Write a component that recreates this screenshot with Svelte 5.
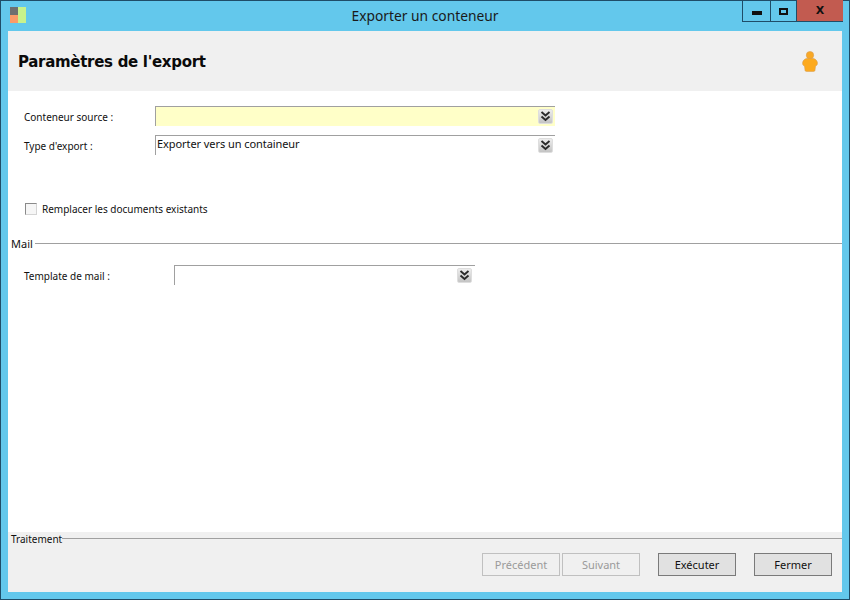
<script>
  const rows = [
    { label: 'Conteneur source :', value: '', cls: 'source' },
    { label: "Type d'export :", value: 'Exporter vers un containeur', cls: 'type' }
  ];
</script>

{#snippet chevron()}
  <span class="chev">
    <svg width="11" height="11" viewBox="0 0 11 11" aria-hidden="true">
      <path d="M1.5 1 L5.5 4.5 L9.5 1 M1.5 5.5 L5.5 9 L9.5 5.5" fill="none" stroke="#2a2a2a" stroke-width="1.9"/>
    </svg>
  </span>
{/snippet}

<div class="window">
  <div class="titlebar">
    <svg class="appicon" width="16" height="16" viewBox="0 0 16 16" aria-hidden="true">
      <rect x="0" y="0" width="8" height="8" fill="#6f6f6f"/>
      <rect x="0" y="8" width="8" height="8" fill="#fb9b68"/>
      <rect x="8" y="0" width="8" height="16" fill="#c8f28c"/>
    </svg>
    <div class="title">Exporter un conteneur</div>
    <div class="controls">
      <div class="ctl min"><span></span></div>
      <div class="ctl max"><span></span></div>
      <div class="ctl close">X</div>
    </div>
  </div>

  <div class="client">
    <header class="head">
      <h1>Paramètres de l'export</h1>
      <svg width="16" height="21" viewBox="0 0 16 21" aria-hidden="true">
        <circle cx="8" cy="4.2" r="3.7" fill="#f9a825" stroke="#d9a050" stroke-width="0.6"/>
        <path d="M4.5 7.5 H11.5 C13.5 8 15 9.5 15.4 11.5 C15.6 13 15.2 14.5 13.5 15 L13 19 C13 20 12.5 20.4 11.5 20.4 H4.5 C3.5 20.4 3 20 3 19 L2.5 15 C0.8 14.5 0.4 13 0.6 11.5 C1 9.5 2.5 8 4.5 7.5 Z" fill="#fdaa1e" stroke="#d9a050" stroke-width="0.6"/>
      </svg>
    </header>

    <main class="body">
      <div class="form">
        {#each rows as r}
          <div class="row">
            <span class="label">{r.label}</span>
            <div class="field {r.cls}">
              <span class="val">{r.value}</span>
              {@render chevron()}
            </div>
          </div>
        {/each}
      </div>

      <label class="check">
        <span class="box"></span>
        <span>Remplacer les documents existants</span>
      </label>

      <div class="section mailsec"><span>Mail</span><i></i></div>

      <div class="row mail">
        <span class="label">Template de mail :</span>
        <div class="field wide">
          <span class="val"></span>
          {@render chevron()}
        </div>
      </div>
    </main>

    <footer class="foot">
      <div class="section tr"><span>Traitement</span><i></i></div>
      <div class="buttons">
        <div class="pair">
          <button disabled>Précédent</button>
          <button disabled>Suivant</button>
        </div>
        <button class="on">Exécuter</button>
        <button class="on">Fermer</button>
      </div>
    </footer>
  </div>
</div>

<style>
  :global(body) { margin: 0; }
  .window {
    box-sizing: border-box;
    width: 850px;
    height: 600px;
    background: #63c8ec;
    border: 1px solid #1f4d68;
    padding: 0 7px 7px;
    display: flex;
    flex-direction: column;
    font-family: "Noto Sans", sans-serif;
    font-size: 10px;
    color: #111;
  }
  .titlebar {
    height: 30px;
    flex: none;
    position: relative;
    display: flex;
    align-items: flex-start;
  }
  .appicon { margin: 6px 0 0 2px; }
  .title {
    position: absolute;
    left: 0;
    right: 0;
    top: 5px;
    text-align: center;
    font-size: 13.8px;
    line-height: 19px;
    color: #1a1a1a;
  }
  .controls {
    position: absolute;
    right: -1px;
    top: -1px;
    display: flex;
    height: 21px;
    border-bottom: 1px solid #1f4d68;
    border-left: 1px solid #1f4d68;
  }
  .ctl {
    display: flex;
    align-items: center;
    justify-content: center;
    box-sizing: border-box;
    height: 21px;
  }
  .min { width: 28px; border-right: 1px solid #1f4d68; }
  .min span { width: 10px; height: 4px; background: #111; margin-top: 5px; }
  .max { width: 26px; border-right: 1px solid #1f4d68; }
  .max span { width: 5px; height: 3px; border: 2px solid #111; margin-top: 1px; }
  .close {
    width: 46px;
    background: #c25b50;
    font-family: "DejaVu Sans", sans-serif;
    font-weight: 700;
    font-size: 11px;
    color: #111;
  }
  .client {
    flex: 1;
    min-height: 0;
    background: #fff;
    display: flex;
    flex-direction: column;
  }
  .head {
    height: 60px;
    flex: none;
    background: #f0f0f0;
    display: flex;
    align-items: center;
    justify-content: space-between;
    padding: 0 24px 0 10px;
  }
  .head h1 {
    margin: 1px 0 0;
    font-family: "DejaVu Sans", sans-serif;
    font-size: 15px;
    font-weight: 700;
    color: #0a0a0a;
    letter-spacing: -0.3px;
  }
  .body {
    flex: 1;
    min-height: 0;
    padding-top: 15px;
    display: flex;
    flex-direction: column;
  }
  .form { display: flex; flex-direction: column; gap: 9px; }
  .row { display: flex; align-items: flex-start; padding-left: 16px; }
  .label { width: 131px; flex: none; padding-top: 4px; line-height: 15px; }
  .field {
    box-sizing: border-box;
    width: 400px;
    height: 20px;
    border-top: 1px solid #a0a0a0;
    border-left: 1px solid #a0a0a0;
    display: flex;
    justify-content: space-between;
    padding: 2px 2px 0 1px;
    line-height: 13px;
    font-size: 11px;
  }
  .source { background: #ffffc8; }
  .wide { width: 301px; padding-right: 3px; }
  .val { white-space: nowrap; margin-top: -1px; letter-spacing: -0.07px; }
  .chev {
    box-sizing: border-box;
    width: 15px;
    height: 15px;
    background: linear-gradient(#ededed, #c4c4c4);
    border: 1px solid #dedede;
    border-radius: 2px;
    display: flex;
    align-items: center;
    justify-content: center;
  }
  .check {
    display: flex;
    align-items: center;
    gap: 5px;
    margin: 46px 0 0 17px;
    height: 15px;
  }
  .box {
    box-sizing: border-box;
    width: 12px;
    height: 12px;
    border: 1px solid;
    border-color: #8a8a8a #d4d4d4 #d4d4d4 #8a8a8a;
    background: #f6f6f6;
  }
  .section { display: flex; align-items: center; padding-left: 3px; }
  .section i { flex: 1; height: 1px; background: #a0a0a0; }
  .mailsec { height: 14px; margin-top: 20px; gap: 2px; font-size: 11px; }
  .mail { margin-top: 15px; }
  .mail .label { width: 150px; }
  .foot {
    height: 60px;
    flex: none;
    background: #f0f0f0;
    display: flex;
    flex-direction: column;
  }
  .tr { height: 13px; }
  .buttons {
    display: flex;
    justify-content: flex-end;
    align-items: center;
    padding: 8px 10px 0 0;
  }
  .pair { display: flex; gap: 2px; margin-right: 18px; }
  button {
    box-sizing: border-box;
    width: 78px;
    height: 23px;
    padding: 0;
    font: inherit;
    font-size: 11px;
    border: 1px solid #adadad;
    background: #f0f0f0;
    color: #9a9a9a;
  }
  .pair button { border-color: #c0c0c0; }
  .on {
    background: #e1e1e1;
    border-color: #7a7a7a;
    color: #111;
  }
  .on + .on { margin-left: 18px; }
</style>
